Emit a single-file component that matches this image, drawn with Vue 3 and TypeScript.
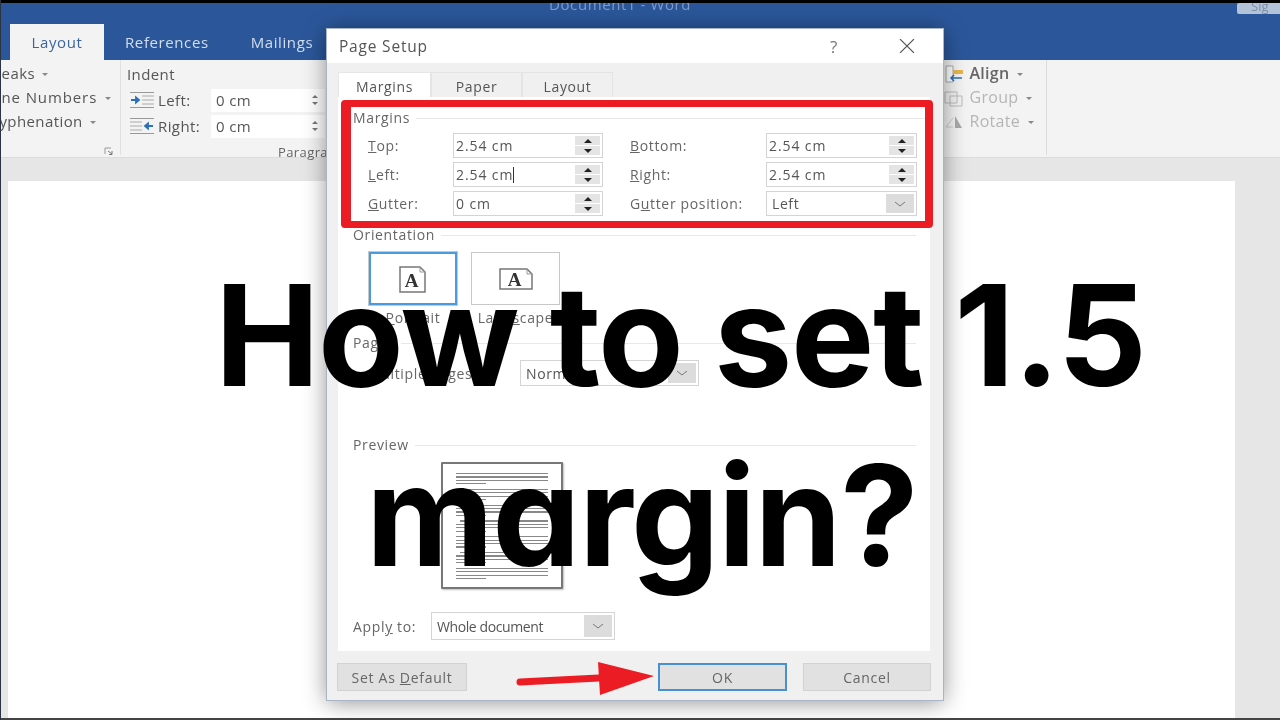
<template>
  <div class="page">
    <div class="word">
      <div class="titlebar">
        <span class="doc-title">Document1 - Word</span>
        <span class="sign">Sig</span>
      </div>
      <div class="tabs">
        <span class="tab active">Layout</span>
        <span class="tab">References</span>
        <span class="tab">Mailings</span>
      </div>
      <div class="ribbon">
        <div class="group first">
          <div class="rb clip1">Breaks <i class="caret"></i></div>
          <div class="rb clip2">Line Numbers <i class="caret"></i></div>
          <div class="rb clip3">Hyphenation <i class="caret"></i></div>
          <svg class="launcher" width="10" height="9" viewBox="0 0 10 9">
            <path d="M1 7V1h6" fill="none" stroke="#999" />
            <path d="M4 4l4 3M8 4v3.500H5" fill="none" stroke="#777" />
          </svg>
        </div>
        <div class="group indent">
          <div class="rb head">Indent</div>
          <div class="indent-row" v-for="r in indents" :key="r.label">
            <svg class="indent-icon" width="24" height="18" viewBox="0 0 24 18">
              <path d="M0 1.500h24M0 16.500h24" stroke="#999" />
              <path :d="r.lines" stroke="#aaa" />
              <path :d="r.arrow" stroke="#2b6fb8" stroke-width="1.800" fill="#2b6fb8" />
            </svg>
            <span class="indent-label">{{ r.label }}</span>
            <div class="rb-input">
              <span>0 cm</span>
              <span class="mini-spin"><i class="up"></i><i class="down"></i></span>
            </div>
          </div>
          <div class="para">Paragraph</div>
        </div>
        <div class="group arrange">
          <div class="rb">
            <svg class="arr-icon" width="20" height="18" viewBox="0 0 20 18">
              <path d="M2 1h7v16H2z" fill="#fff" stroke="#aaa" />
              <path d="M9 5h10v4H9z" fill="#e8b64c" />
              <path d="M18 13H7M10 10l-3 3 3 3" fill="none" stroke="#2b6fb8" stroke-width="1.500" />
            </svg>
            Align <i class="caret"></i>
          </div>
          <div class="rb off">
            <svg class="arr-icon" width="20" height="18" viewBox="0 0 20 18">
              <path d="M1 3h12v11H1zM6 7h12v10H6z" fill="none" stroke="#bbb" />
            </svg>
            Group <i class="caret"></i>
          </div>
          <div class="rb off">
            <svg class="arr-icon" width="20" height="18" viewBox="0 0 20 18">
              <path d="M11 3l7 12h-7z" fill="#aaa" />
              <path d="M9 14H2l7-9" fill="none" stroke="#ccc" />
            </svg>
            Rotate <i class="caret"></i>
          </div>
        </div>
      </div>
      <div class="canvas">
        <div class="sheet"></div>
      </div>

      <div class="dialog">
        <div class="dlg-title">
          <span class="dlg-name">Page Setup</span>
          <span class="help">?</span>
          <svg width="18" height="14" viewBox="0 0 18 14">
            <path d="M2 0l14 14M16 0L2 14" stroke="#555" stroke-width="1.100" />
          </svg>
        </div>
        <div class="dlg-body">
          <div class="dlg-tabs">
            <span class="dlg-tab on">Margins</span>
            <span class="dlg-tab">Paper</span>
            <span class="dlg-tab">Layout</span>
          </div>
          <div class="panel">
            <div class="redbox">
              <div class="section-head"><span>Margins</span><i></i></div>
              <div class="margin-grid">
                <template v-for="f in marginFields" :key="f.key + f.post">
                  <label :class="{ far: f.far }">{{ f.pre }}<u>{{ f.key }}</u>{{ f.post }}</label>
                  <div class="field" :class="{ select: f.select }">
                    <span class="val">{{ f.value }}<b v-if="f.caret" class="cursor"></b></span>
                    <span v-if="f.select" class="drop">
                      <svg width="12" height="6" viewBox="0 0 12 6"><path d="M1 1l5 4 5-4" fill="none" stroke="#777" /></svg>
                    </span>
                    <span v-else class="spin">
                      <em><i class="up"></i></em>
                      <em><i class="down"></i></em>
                    </span>
                  </div>
                </template>
              </div>
            </div>

            <div class="section-head orient"><span>Orientation</span><i></i></div>
            <div class="orient-row">
              <div class="orient-col">
                <div class="orient-btn selected">
                  <svg width="30" height="30" viewBox="0 0 30 30">
                    <path d="M2 3h20l5 5v20H2z" fill="#fff" stroke="#777" stroke-width="1.500" />
                    <path d="M22 3v5h5" fill="none" stroke="#999" />
                    <text x="14" y="23" text-anchor="middle" class="glyph">A</text>
                  </svg>
                </div>
                <span class="orient-label"><u>P</u>ortrait</span>
              </div>
              <div class="orient-col wide">
                <div class="orient-btn">
                  <svg width="36" height="24" viewBox="0 0 36 24">
                    <path d="M2 2h27l5 5v15H2z" fill="#fff" stroke="#777" stroke-width="1.500" />
                    <path d="M29 2v5h5" fill="none" stroke="#999" />
                    <text x="17" y="19" text-anchor="middle" class="glyph">A</text>
                  </svg>
                </div>
                <span class="orient-label">Land<u>s</u>cape</span>
              </div>
            </div>

            <div class="section-head pages"><span>Pages</span><i></i></div>
            <div class="pages-row">
              <label class="pages-label"><u>M</u>ultiple pages:</label>
              <div class="field select pages-select">
                <span class="val">Normal</span>
                <span class="drop">
                  <svg width="12" height="6" viewBox="0 0 12 6"><path d="M1 1l5 4 5-4" fill="none" stroke="#777" /></svg>
                </span>
              </div>
            </div>

            <div class="section-head preview"><span>Preview</span><i></i></div>
            <div class="sample">
              <div class="para-lines" v-for="g in 7" :key="g">
                <i class="ln" :class="{ first: g % 2 === 0 }"></i>
                <i class="ln"></i>
                <i class="ln"></i>
                <i class="ln short"></i>
              </div>
            </div>

            <div class="apply-row">
              <label class="apply-label">Appl<u>y</u> to:</label>
              <div class="field select apply-select">
                <span class="val">Whole document</span>
                <span class="drop">
                  <svg width="12" height="6" viewBox="0 0 12 6"><path d="M1 1l5 4 5-4" fill="none" stroke="#777" /></svg>
                </span>
              </div>
            </div>
          </div>
          <div class="dlg-foot">
            <button class="btn default-btn">Set As <u>D</u>efault</button>
            <button class="btn ok">OK</button>
            <button class="btn cancel">Cancel</button>
          </div>
        </div>
      </div>
    </div>

    <svg class="arrow" width="142" height="36" viewBox="0 0 142 36">
      <path d="M5 22L84 18" stroke="#ec1c24" stroke-width="7" stroke-linecap="round" />
      <path d="M83 2L139 16 85 35z" fill="#ec1c24" />
    </svg>

    <div class="headline">
      <div class="line one">How to set 1.5</div>
      <div class="line two">margin?</div>
    </div>
  </div>
</template>

<script setup lang="ts">
interface MarginField {
  pre: string;
  key: string;
  post: string;
  value: string;
  far?: boolean;
  caret?: boolean;
  select?: boolean;
}

const indents = [
  {
    label: "Left:",
    lines: "M12 5h12M12 9h12M12 13h12",
    arrow: "M1 9h7M6 6.500l3 2.500-3 2.500z",
  },
  {
    label: "Right:",
    lines: "M0 5h12M0 9h12M0 13h12",
    arrow: "M23 9h-7M18 6.500l-3 2.500 3 2.500z",
  },
];

const marginFields: MarginField[] = [
  { pre: "", key: "T", post: "op:", value: "2.54 cm" },
  { pre: "", key: "B", post: "ottom:", value: "2.54 cm", far: true },
  { pre: "", key: "L", post: "eft:", value: "2.54 cm", caret: true },
  { pre: "", key: "R", post: "ight:", value: "2.54 cm", far: true },
  { pre: "", key: "G", post: "utter:", value: "0 cm" },
  { pre: "G", key: "u", post: "tter position:", value: "Left", far: true, select: true },
];
</script>

<style>
html,
body {
  margin: 0;
  background: #e6e6e6;
}
</style>

<style scoped>
.page {
  position: relative;
  width: 1280px;
  height: 720px;
  overflow: hidden;
  background: #000;
  font-family: "Open Sans", "Liberation Sans", sans-serif;
  color: #555;
}

.page::after {
  content: "";
  position: absolute;
  left: 0;
  top: 0;
  bottom: 0;
  width: 1px;
  background: #2a3342;
}

.word {
  position: relative;
  height: 720px;
  display: flex;
  flex-direction: column;
  padding-top: 3px;
  box-sizing: border-box;
  filter: blur(0.7px);
}

.titlebar {
  height: 21px;
  background: #2b579a;
  display: flex;
  justify-content: space-between;
  overflow: hidden;
  position: relative;
}

.doc-title {
  margin: -9px 0 0 549px;
  font-size: 15px;
  letter-spacing: 0.6px;
  color: #7f9ccb;
}

.sign {
  width: 43px;
  height: 11px;
  padding-left: 14px;
  box-sizing: border-box;
  background: #b3c3da;
  border-radius: 2px 0 0 2px;
  color: #7f8da3;
  font-size: 13px;
  line-height: 6px;
}

.tabs {
  height: 36px;
  background: #2b579a;
  display: flex;
  align-items: stretch;
  padding-left: 10px;
  font-size: 15px;
  letter-spacing: 0.6px;
  font-weight: 500;
}

.tab {
  color: #d3deef;
  line-height: 36px;
  padding: 0 21px;
}

.tab.active {
  background: #f3f3f3;
  color: #3c659f;
  width: 94px;
  padding: 0;
  text-align: center;
  box-sizing: border-box;
}

.ribbon {
  height: 98px;
  background: #f3f3f3;
  display: flex;
  border-bottom: 1px solid #dcdcdc;
  box-sizing: border-box;
  font-size: 15px;
  letter-spacing: 0.4px;
  color: #555;
}

.group {
  position: relative;
  padding-top: 1px;
  height: 95px;
  box-sizing: border-box;
}

.group.first {
  width: 121px;
  border-right: 1px solid #e0e0e0;
  overflow: hidden;
}

.rb {
  height: 24px;
  line-height: 24px;
  white-space: nowrap;
}

.clip1 {
  margin-left: -15px;
}

.clip2 {
  margin-left: -12px;
  letter-spacing: 0.9px;
}

.clip3 {
  margin-left: -12px;
}

.caret {
  display: inline-block;
  width: 0;
  height: 0;
  margin: 0 0 3px 3px;
  border: 3px solid transparent;
  border-top: 3px solid #888;
  border-bottom: 0;
}

.launcher {
  position: absolute;
  left: 104px;
  top: 87px;
}

.indent {
  width: 822px;
  padding: 2px 0 0 6px;
}

.indent-row {
  height: 26px;
  display: flex;
  align-items: center;
  padding-left: 3px;
  margin-top: 1px;
  margin-bottom: -1px;
}

.indent-icon {
  margin-right: 4px;
}

.indent-label {
  width: 53px;
}

.rb-input {
  width: 114px;
  height: 23px;
  background: #fff;
  padding: 0 7px 0 5px;
  box-sizing: border-box;
  display: flex;
  justify-content: space-between;
  align-items: center;
  white-space: nowrap;
}

.mini-spin {
  display: flex;
  flex-direction: column;
  gap: 4px;
}

.mini-spin i {
  display: block;
  width: 0;
  height: 0;
  border: 3px solid transparent;
}

.mini-spin .up {
  border-top: 0;
  border-bottom-color: #777;
}

.mini-spin .down {
  border-bottom: 0;
  border-top-color: #777;
}

.para {
  position: absolute;
  left: 157px;
  top: 83px;
  font-size: 13px;
  color: #666;
}

.arrange {
  width: 105px;
  padding-left: 2px;
  border-right: 1px solid #dcdcdc;
  font-size: 16px;
  letter-spacing: 0.3px;
  font-weight: 600;
  color: #666;
  margin-left: -1px;
}

.arr-icon {
  vertical-align: -4px;
  margin-right: 1px;
}

.off {
  color: #b5b5b5;
  font-weight: 400;
}

.canvas {
  flex: 1;
  background: #e6e6e6;
  padding: 23px 45px 0 8px;
  border-bottom: 2px solid #444;
  min-height: 0;
}

.sheet {
  height: 100%;
  background: #fff;
}

/* the dialog floats over the document window */
.dialog {
  position: absolute;
  left: 327px;
  top: 29px;
  width: 616px;
  height: 671px;
  background: #f0f0f0;
  box-shadow: 0 2px 22px rgba(0, 0, 0, 0.45);
  outline: 1px solid #a9b4c4;
  display: flex;
  flex-direction: column;
  font-size: 14px;
  letter-spacing: 0.65px;
}

.dlg-title {
  height: 34px;
  background: #fff;
  display: flex;
  align-items: center;
  padding: 0 27px 0 12px;
}

.dlg-name {
  flex: 1;
  font-size: 15.500px;
  letter-spacing: 0.8px;
  font-weight: 500;
  color: #555;
}

.help {
  margin-right: 60px;
  font-size: 17px;
  color: #777;
}

.dlg-body {
  flex: 1;
  padding-top: 9px;
}

.dlg-tabs {
  height: 25px;
  margin-left: 11px;
  display: flex;
  align-items: stretch;
  font-weight: 500;
}

.dlg-tab {
  width: 91px;
  text-align: center;
  line-height: 27px;
  background: #f0f0f0;
  border: 1px solid #e4e4e4;
  border-bottom: 0;
  box-sizing: border-box;
}

.dlg-tab.on {
  width: 93px;
  background: #fff;
  border-color: #e6e6e6;
}

.panel {
  height: 554px;
  margin: 0 13px 0 11px;
  padding-top: 3px;
  box-sizing: border-box;
  background: #fff;
}

.redbox {
  position: relative;
  height: 128px;
  margin: 0 -3px 0 3px;
  padding-top: 3px;
  box-sizing: border-box;
  border: solid #ec1c24;
  border-width: 7px 8px 7px 10px;
  border-radius: 4px;
}

.section-head {
  height: 16px;
  display: flex;
  align-items: center;
  gap: 6px;
  line-height: 16px;
  color: #666;
}

.section-head i {
  flex: 1;
  height: 1px;
  background: #e8e8e8;
}

.redbox .section-head {
  margin-left: 2px;
}

.margin-grid {
  display: grid;
  grid-template-columns: 85px 150px 163px 151px;
  grid-auto-rows: 25px;
  row-gap: 4px;
  margin: 7px 0 0 17px;
  align-items: center;
}

.margin-grid label {
  color: #666;
}

.margin-grid label.far {
  padding-left: 27px;
}

.field {
  height: 100%;
  display: flex;
  justify-content: space-between;
  align-items: stretch;
  background: #fff;
  border: 1px solid #d4d4d4;
  box-sizing: border-box;
}

.val {
  align-self: center;
  padding-left: 2px;
  letter-spacing: 0.9px;
  color: #555;
  position: relative;
}

.select .val {
  padding-left: 5px;
  letter-spacing: 0.6px;
}

.cursor {
  position: absolute;
  top: 2px;
  right: -1px;
  width: 1px;
  height: 16px;
  background: #333;
}

.spin {
  width: 25px;
  margin: 2px;
  display: flex;
  flex-direction: column;
  gap: 1px;
}

.spin em {
  flex: 1;
  display: flex;
  align-items: center;
  justify-content: center;
  background: #e4e4e4;
}

.spin i {
  display: block;
  width: 0;
  height: 0;
  border: 4px solid transparent;
}

.spin .up {
  border-top: 0;
  border-bottom-color: #222;
}

.spin .down {
  border-bottom: 0;
  border-top-color: #222;
}

.drop {
  width: 28px;
  margin: 2px;
  background: #dcdcdc;
  display: flex;
  align-items: center;
  justify-content: center;
}

.orient {
  margin: -1px 14px 0 15px;
}

.orient-row {
  display: flex;
  gap: 14px;
  margin: 9px 0 0 31px;
}

.orient-col {
  width: 88px;
  display: flex;
  flex-direction: column;
  align-items: center;
}

.orient-col.wide {
  width: 89px;
}

.orient-btn {
  width: 100%;
  height: 53px;
  display: flex;
  align-items: center;
  justify-content: center;
  box-sizing: border-box;
  border: 1px solid #c8c8c8;
}

.orient-btn.selected {
  border: 2px solid #4a9ae0;
  outline: 1px solid #c8c8c8;
}

.glyph {
  font-family: "Liberation Serif", serif;
  font-weight: 700;
  font-size: 19px;
  fill: #333;
}

.orient-label {
  margin-top: 5px;
  line-height: 16px;
  color: #666;
}

.pages {
  margin: 9px 14px 0 15px;
}

.pages-row {
  display: flex;
  align-items: center;
  height: 26px;
  margin: 9px 0 0 30px;
}

.pages-label {
  width: 152px;
  color: #666;
}

.pages-select {
  width: 179px;
}

.preview {
  margin: 51px 14px 0 15px;
}

.sample {
  width: 122px;
  height: 127px;
  margin: 9px 0 0 103px;
  padding: 9px 13px 0;
  box-sizing: border-box;
  border: 2px solid #777;
  border-radius: 1px;
  box-shadow: 1px 1px 2px rgba(0, 0, 0, 0.25);
  display: flex;
  flex-direction: column;
  gap: 4.500px;
}

.para-lines {
  display: flex;
  flex-direction: column;
  gap: 2.200px;
}

.ln {
  display: block;
  height: 1.200px;
  background: #888;
}

.ln.first {
  margin-left: 4px;
}

.ln.short {
  width: 30px;
}

.apply-row {
  display: flex;
  align-items: center;
  height: 28px;
  margin: 23px 0 0 15px;
}

.apply-label {
  width: 78px;
  color: #666;
}

.apply-select {
  width: 184px;
}

.apply-select .val {
  letter-spacing: -0.4px;
}

.dlg-foot {
  display: flex;
  gap: 16px;
  padding: 12px 12px 0 10px;
}

.btn {
  height: 28px;
  padding: 0;
  background: #e1e1e1;
  border: 1px solid #d2d2d2;
  font-family: inherit;
  font-size: 14px;
  letter-spacing: 0.7px;
  color: #666;
}

.default-btn {
  width: 130px;
  margin-right: auto;
}

.ok {
  width: 129px;
  border: 2px solid #4a90d0;
}

.cancel {
  width: 128px;
}

.arrow {
  position: absolute;
  left: 515px;
  top: 660px;
}

.headline {
  position: absolute;
  left: 0;
  top: 0;
  font-family: Inter, "Liberation Sans", sans-serif;
  font-weight: 700;
  font-size: 140px;
  line-height: 180px;
  letter-spacing: -1.5px;
  color: #000;
  font-feature-settings: "cv11";
  white-space: nowrap;
}

.line.one {
  margin: 245px 0 0 215px;
}

.line.two {
  margin-left: 366px;
}
</style>
